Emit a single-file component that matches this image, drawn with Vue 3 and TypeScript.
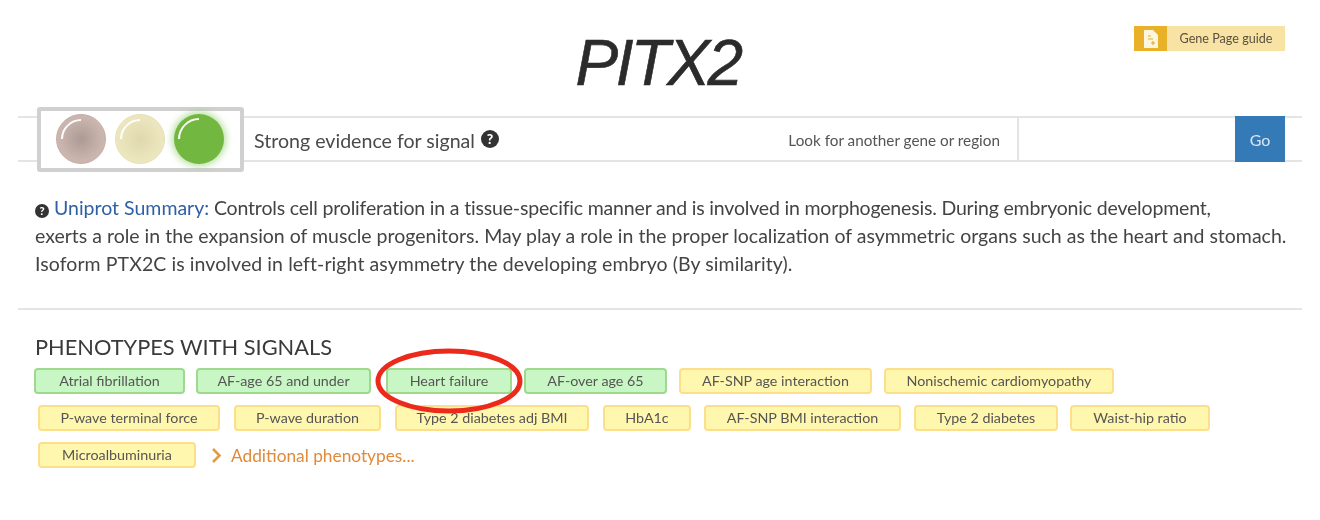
<template>
  <div class="page">
    <header class="head">
      <span />
      <h1 class="title">PITX2</h1>
      <a class="guide">
        <span class="guide__icon">
          <svg width="16" height="18" viewBox="0 0 16 18">
            <path d="M1 0h9l5 5v13H1z" fill="#fdf6df" />
            <path d="M5 6h3M5 9h5M8 13h4M10 11v4" stroke="#e3ad2b" stroke-width="1.2" fill="none" />
          </svg>
        </span>
        <span class="guide__text">Gene Page guide</span>
      </a>
    </header>

    <section class="band">
      <div class="lights">
        <span class="light light--red" />
        <span class="light light--yellow" />
        <span class="light light--green" />
      </div>
      <span class="signal">Strong evidence for signal</span>
      <span class="help help--big">?</span>
      <label class="look">Look for another gene or region</label>
      <input class="search" type="text" />
      <button class="go">Go</button>
    </section>

    <div class="summary">
      <p class="summary__line summary__line--first">
        <span class="help help--small">?</span>
        <a class="summary__link">Uniprot Summary:</a> Controls cell proliferation in a tissue-specific manner and is involved in morphogenesis. During embryonic development,
      </p>
      <p class="summary__line">exerts a role in the expansion of muscle progenitors. May play a role in the proper localization of asymmetric organs such as the heart and stomach.</p>
      <p class="summary__line summary__line--last">Isoform PTX2C is involved in left-right asymmetry the developing embryo (By similarity).</p>
    </div>

    <section class="phenotypes">
      <h2 class="phenotypes__title">PHENOTYPES WITH SIGNALS</h2>
      <div v-for="(row, i) in rows" :key="i" class="row" :class="'row--' + i">
        <span
          v-for="tag in row"
          :key="tag.label"
          class="tag"
          :class="'tag--' + tag.kind"
          :style="{ width: tag.width + 'px', marginLeft: tag.gap + 'px' }"
        >{{ tag.label }}</span>
        <a v-if="i === 2" class="more">
          <svg class="more__arrow" width="11" height="17" viewBox="0 0 11 17">
            <path d="M2 2l6.5 6.5L2 15" fill="none" stroke="#e69a3a" stroke-width="2.6" />
          </svg>
          Additional phenotypes...
        </a>
      </div>
    </section>

    <svg class="circle" width="154" height="72" viewBox="0 0 154 72">
      <ellipse cx="77" cy="36" rx="71" ry="30" fill="none" stroke="#ec2a1c" stroke-width="5" />
    </svg>
  </div>
</template>

<script setup lang="ts">
type Tag = { label: string; kind: 'green' | 'yellow'; width: number; gap: number };

const green = (label: string, width: number, gap: number): Tag => ({ label, kind: 'green', width, gap });
const yellow = (label: string, width: number, gap: number): Tag => ({ label, kind: 'yellow', width, gap });

const rows: Tag[][] = [
  [
    green('Atrial fibrillation', 151, 0),
    green('AF-age 65 and under', 175, 11),
    green('Heart failure', 126, 15),
    green('AF-over age 65', 143, 12),
    yellow('AF-SNP age interaction', 193, 12),
    yellow('Nonischemic cardiomyopathy', 230, 12)
  ],
  [
    yellow('P-wave terminal force', 182, 0),
    yellow('P-wave duration', 147, 14),
    yellow('Type 2 diabetes adj BMI', 194, 14),
    yellow('HbA1c', 88, 14),
    yellow('AF-SNP BMI interaction', 197, 13),
    yellow('Type 2 diabetes', 144, 13),
    yellow('Waist-hip ratio', 140, 12)
  ],
  [yellow('Microalbuminuria', 158, 0)]
];
</script>

<style>
body {
  margin: 0;
  background: #fff;
}
</style>

<style scoped>
.page {
  position: relative;
  width: 1320px;
  height: 520px;
  overflow: hidden;
  box-sizing: border-box;
  padding: 0 18px;
  font-family: Lato, 'Liberation Sans', sans-serif;
  color: #444;
  filter: blur(0.6px);
}
.head {
  display: grid;
  grid-template-columns: 1fr auto 1fr;
  align-items: start;
  height: 116px;
  padding-right: 4px;
}
.title {
  margin: 27px 0 0;
  font: italic 400 64px/72px 'Liberation Sans', Arial, sans-serif;
  letter-spacing: -2.6px;
  -webkit-text-stroke: 0.6px #2b2b2b;
  color: #2b2b2b;
}
.guide {
  justify-self: end;
  display: flex;
  height: 25px;
  width: 151px;
  margin: 26px 13px 0 0;
  background: #f8e3a4;
  font-size: 12.6px;
  color: #5a5140;
}
.guide__icon {
  display: flex;
  align-items: center;
  justify-content: center;
  width: 33px;
  background: #e8b128;
}
.guide__text {
  flex: 1;
  align-self: center;
  text-align: center;
}
.band {
  display: flex;
  align-items: center;
  height: 46px;
  box-sizing: border-box;
  border-top: 2px solid #e4e4e4;
  border-bottom: 2px solid #e4e4e4;
  padding-right: 17px;
}
.lights {
  display: flex;
  align-items: center;
  gap: 9px;
  box-sizing: border-box;
  width: 207px;
  height: 65px;
  margin: 0 10px 0 19px;
  padding: 0 0 0 15px;
  background: #fff;
  border: 4px solid #d0d0d0;
  border-radius: 3px;
}
.light {
  position: relative;
  flex: none;
  width: 50px;
  height: 50px;
  border-radius: 50%;
  box-sizing: border-box;
}
.light::after {
  content: '';
  position: absolute;
  inset: 4px;
  box-sizing: border-box;
  border-radius: 50%;
  border-top: 2px solid rgba(255, 255, 255, 0.95);
  border-left: 2px solid transparent;
  border-right: 2px solid transparent;
  border-bottom: 2px solid transparent;
  transform: rotate(-45deg);
}
.light--red {
  background: radial-gradient(circle, #ad9a94 0%, #c9b5ae 62%, #d2bdb6 100%);
  border: 1px solid #c6aea6;
}
.light--yellow {
  background: radial-gradient(circle, #dfd8ae 0%, #ece6be 65%, #f1ebc8 100%);
  border: 1px solid #e6dfb5;
}
.light--green {
  background: #72b840;
  box-shadow: 0 0 7px 2px rgba(130, 200, 90, 0.6);
}
.signal {
  margin-top: 2px;
  font-size: 19.6px;
  color: #4a4a4a;
}
.help {
  display: inline-flex;
  align-items: center;
  justify-content: center;
  border-radius: 50%;
  background: #333;
  color: #fff;
  font-weight: 900;
}
.help--big {
  width: 18px;
  height: 18px;
  margin: -1px 0 0 6px;
  font-size: 14px;
}
.help--small {
  width: 14px;
  height: 14px;
  font-size: 11px;
  letter-spacing: 0;
}
.look {
  margin: 1px 0 0 auto;
  font-size: 15.3px;
  color: #555;
}
.search {
  box-sizing: border-box;
  width: 218px;
  height: 100%;
  margin-left: 17px;
  border: 0;
  border-left: 2px solid #e4e4e4;
  background: #fff;
}
.go {
  width: 50px;
  height: 46px;
  margin: -2px 0;
  border: 0;
  background: #337ab7;
  color: #d8e6f2;
  font: 400 16px Lato, sans-serif;
}
.summary {
  height: 148px;
  box-sizing: border-box;
  padding: 32px 0 0 17px;
  border-bottom: 2px solid #e4e4e4;
  font-size: 19.5px;
  line-height: 28px;
  color: #444;
  white-space: nowrap;
}
.summary__line {
  margin: 0;
}
.summary__line--first {
  letter-spacing: -0.18px;
}
.summary__line--last {
  letter-spacing: 0.08px;
}
.summary__link {
  margin-left: 5px;
  letter-spacing: 0;
  color: #2f5fa5;
}
.phenotypes {
  padding: 25px 0 0 16px;
}
.phenotypes__title {
  margin: 0 0 9px 1px;
  font-size: 21.8px;
  font-weight: 400;
  line-height: 24px;
  color: #3a3a3a;
}
.row {
  display: flex;
  align-items: center;
  margin-bottom: 11px;
}
.row--1,
.row--2 {
  padding-left: 4px;
}
.tag {
  box-sizing: border-box;
  height: 26px;
  border-radius: 4px;
  border: 2px solid;
  font-size: 14.3px;
  line-height: 22px;
  text-align: center;
  white-space: nowrap;
  color: #555;
}
.tag--green {
  background: #c8f7c5;
  border-color: #9fd98e;
}
.tag--yellow {
  background: #fff7ae;
  border-color: #fcdf8a;
}
.more {
  display: inline-flex;
  align-items: center;
  gap: 9px;
  margin-left: 15px;
  font-size: 17.3px;
  color: #e08a3a;
}
.circle {
  position: absolute;
  left: 372px;
  top: 345px;
}
</style>
